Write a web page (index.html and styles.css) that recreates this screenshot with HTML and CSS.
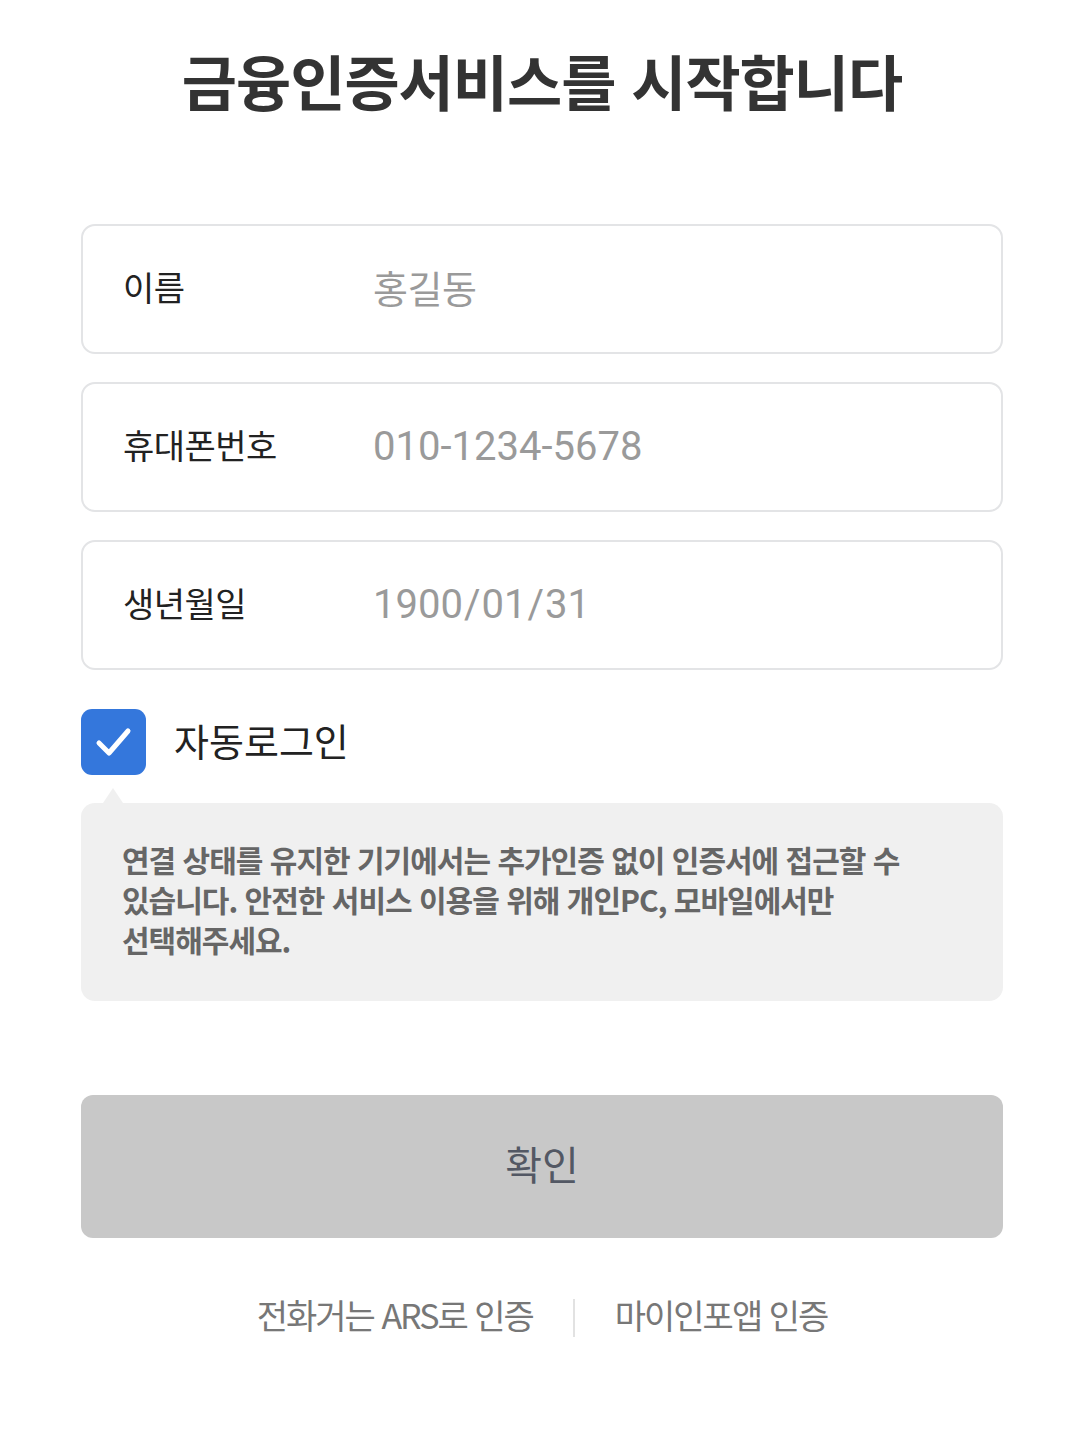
FILE: index.html
```html
<!doctype html>
<html lang="ko">
    <head>
        <meta charset="utf-8">
        <title>금융인증서비스</title>
        <link rel="stylesheet" href="styles.css">
    </head>

    <body>
        <div id="page">
            <h1 id="title">금융인증서비스를 시작합니다</h1>

            <div id="fields">
                <div class="field">
                    <span class="field-label">이름</span>
                    <span class="field-value">홍길동</span>
                </div>
                <div class="field">
                    <span class="field-label">휴대폰번호</span>
                    <span class="field-value num">010-1234-5678</span>
                </div>
                <div class="field">
                    <span class="field-label">생년월일</span>
                    <span class="field-value num">1900<span class="sep">/</span>01<span class="sep">/</span>31</span>
                </div>
            </div>

            <label id="auto-login">
                <span class="checkbox">
                    <svg width="65" height="66" viewBox="0 0 65 66">
                        <path d="M18 34 L28 44 L47 22" fill="none" stroke="#fff" stroke-width="5" stroke-linecap="round" stroke-linejoin="round"/>
                    </svg>
                </span>
                <span class="checkbox-label">자동로그인</span>
            </label>

            <div id="notice">
                연결 상태를 유지한 기기에서는 추가인증 없이 인증서에 접근할 수 있습니다. 안전한 서비스 이용을 위해 개인PC, 모바일에서만 선택해주세요.
            </div>

            <button id="confirm">확인</button>

            <div id="alt-links">
                <a class="alt-link">전화거는 ARS로 인증</a>
                <span class="divider"></span>
                <a class="alt-link">마이인포앱 인증</a>
            </div>
        </div>
    </body>
</html>
```

FILE: styles.css
```css
body {
    margin: 0;
    background: #fff;
    font-family: 'Noto Sans CJK KR', 'Noto Sans', sans-serif;
    color: #222;
}

#page {
    width: 922px;
    margin-left: 81px;
    display: flex;
    flex-direction: column;
}

#title {
    margin: 40px 0 0;
    text-align: center;
    font-size: 60px;
    font-weight: 700;
    line-height: 80px;
    letter-spacing: -1px;
    color: #333;
}

#fields {
    margin-top: 104px;
    display: flex;
    flex-direction: column;
    gap: 28px;
}

.field {
    height: 130px;
    box-sizing: border-box;
    border: 2px solid #e3e4e6;
    border-radius: 14px;
    display: flex;
    align-items: center;
    padding-left: 40px;
    padding-bottom: 6px;
}

.field-label {
    width: 250px;
    font-size: 34px;
    color: #222;
    letter-spacing: -0.5px;
}

.field-value {
    font-size: 38px;
    color: #9a9a9a;
    letter-spacing: -0.5px;
}

.field-value.num {
    font-family: Roboto, 'Noto Sans CJK KR', sans-serif;
    font-size: 40px;
    letter-spacing: 0;
    padding-top: 4px;
}

.sep {
    margin: 0 1px;
}

#auto-login {
    margin-top: 39px;
    display: flex;
    align-items: center;
    gap: 28px;
}

.checkbox {
    width: 65px;
    height: 66px;
    border-radius: 11px;
    background: #3477dc;
    display: flex;
}

.checkbox-label {
    font-size: 38px;
    color: #222;
    padding-bottom: 6px;
}

#notice {
    position: relative;
    margin-top: 28px;
    height: 198px;
    box-sizing: border-box;
    padding: 36px 80px 0 41px;
    background: #f0f0f0;
    border-radius: 14px;
    font-size: 30px;
    font-weight: 700;
    line-height: 40px;
    letter-spacing: -1px;
    word-break: keep-all;
    color: #666;
}

#notice::before {
    content: '';
    position: absolute;
    top: -15px;
    left: 22px;
    border-left: 10px solid transparent;
    border-right: 10px solid transparent;
    border-bottom: 15px solid #f0f0f0;
}

#confirm {
    margin-top: 94px;
    height: 143px;
    border: none;
    border-radius: 12px;
    background: #c8c8c8;
    font-family: inherit;
    font-size: 40px;
    color: #535864;
    padding-bottom: 8px;
}

#alt-links {
    margin-top: 52px;
    display: flex;
    justify-content: center;
    align-items: center;
    gap: 40px;
}

.alt-link {
    font-size: 34px;
    color: #777;
    letter-spacing: -2px;
    padding-bottom: 6px;
}

.divider {
    width: 2px;
    height: 38px;
    background: #e2e2e2;
}
```
